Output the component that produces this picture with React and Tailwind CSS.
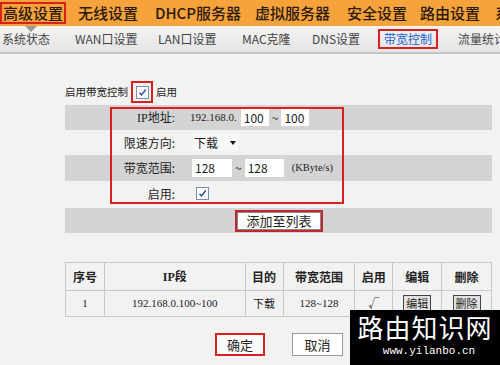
import React from "react";

const cjk = { fontFamily: '"Noto Sans CJK SC", "Noto Sans", sans-serif' };
const serif = { fontFamily: '"Liberation Serif", "Noto Sans CJK SC", serif' };

function Check() {
  return (
    <span className="inline-flex items-center justify-center w-[13px] h-[13px] bg-white border border-[#7b8fb0]">
      <svg width="9" height="9" viewBox="0 0 9 9">
        <path d="M1.5 4.8 L3.5 7 L7.8 1.5" fill="none" stroke="#2a4fa8" strokeWidth="1.4" />
      </svg>
    </span>
  );
}

const top = [
  ["高级设置", "w-[76px]", true],
  ["无线设置", "w-[77px]"],
  ["DHCP服务器", "w-[100px]"],
  ["虚拟服务器", "w-[92px]"],
  ["安全设置", "w-[73px]"],
  ["路由设置", "w-[75px]"],
  ["系统工具", "w-[80px]"],
];

const sub = [
  ["系统状态", "w-[73px]"],
  ["WAN口设置", "w-[83px]"],
  ["LAN口设置", "w-[84px]"],
  ["MAC克隆", "w-[70px]"],
  ["DNS设置", "w-[66px]"],
  ["带宽控制", "w-[80px]", true],
  ["流量统计", "w-[80px]"],
];

export default function App() {
  return (
    <div className="relative w-[500px] h-[365px] overflow-hidden bg-[#f2f2f2] text-[#222]" style={cjk}>
      {/* top orange bar */}
      <div className="h-[26px] bg-[#f6a33c] flex items-center pl-[2px] whitespace-nowrap">
        {top.map(([t, w, sel]) => (
          <div key={t} className={`${w} shrink-0 flex`}>
            <span
              className={`text-[15px] leading-[18px] font-medium text-[#2b1a08] ${sel ? "outline-2 outline-[#d8201c] px-[1px]" : ""}`}
            >
              {t}
            </span>
          </div>
        ))}
      </div>

      {/* sub tabs */}
      <div className="relative h-[28px] bg-gradient-to-b from-[#f4f4f4] to-[#e4e4e4] border-b-2 border-[#c4c4c4] flex items-center pl-[2px] whitespace-nowrap">
        <span className="absolute left-[25px] top-0 w-0 h-0 border-l-[6px] border-r-[6px] border-t-[6px] border-l-transparent border-r-transparent border-t-[#9a9a9a]" />
        {sub.map(([t, w, sel]) => (
          <div key={t} className={`${w} shrink-0 flex`}>
            <span
              className={`text-[12px] leading-[14px] ${sel ? "text-[#1b5fd6] border-2 border-[#d8201c] px-[4px] py-[1px]" : "text-[#444]"}`}
            >
              {t}
            </span>
          </div>
        ))}
      </div>

      {/* enable row */}
      <div className="mt-[27px] ml-[65px] h-[22px] flex items-center text-[10.5px]">
        <span>启用带宽控制</span>
        <span className="ml-[3px] w-[22px] h-[22px] border-2 border-[#d8201c] flex items-center justify-center">
          <Check />
        </span>
        <span className="ml-[3px]">启用</span>
      </div>

      {/* form */}
      <div className="relative mt-[2px] ml-[65px] w-[427px] text-[12px]">
        <div className="h-[25px] bg-[#d4d4d4] flex items-center">
          <div className="w-[110px] text-right" style={serif}>IP地址:</div>
          <div className="ml-[15px] flex items-center">
            <span className="text-[11px]" style={serif}>192.168.0.</span>
            <span className="ml-[4px] w-[28px] h-[17px] bg-white px-[3px] leading-[17px]">100</span>
            <span className="mx-[3px]">~</span>
            <span className="w-[28px] h-[17px] bg-white px-[3px] leading-[17px]">100</span>
          </div>
        </div>
        <div className="h-[25px] flex items-center">
          <div className="w-[110px] text-right">限速方向:</div>
          <div className="ml-[17px] w-[46px] h-[17px] bg-[#f7f7f7] flex items-center px-[2px] justify-between">
            <span>下载</span>
            <span className="w-0 h-0 border-l-[3px] border-r-[3px] border-t-[4px] border-l-transparent border-r-transparent border-t-[#111]" />
          </div>
        </div>
        <div className="h-[26px] bg-[#d4d4d4] flex items-center">
          <div className="w-[110px] text-right">带宽范围:</div>
          <div className="ml-[17px] flex items-center">
            <span className="w-[40px] h-[18px] bg-white px-[3px] leading-[18px]">128</span>
            <span className="mx-[3px]">~</span>
            <span className="w-[39px] h-[18px] bg-white px-[3px] leading-[18px]">128</span>
            <span className="ml-[8px] text-[10.5px] whitespace-nowrap" style={serif}>(KByte/s)</span>
          </div>
        </div>
        <div className="h-[25px] flex items-center">
          <div className="w-[110px] text-right">启用:</div>
          <div className="ml-[21px] flex">
            <Check />
          </div>
        </div>
        <div className="mt-[2px] h-[25px] bg-[#d4d4d4] flex items-center">
          <div className="ml-[170px] border-2 border-[#c0282e] flex">
            <span className="w-[84px] h-[18px] bg-white border border-[#888] text-center text-[13px] leading-[16px]">添加至列表</span>
          </div>
        </div>
        {/* red annotation frame */}
        <div className="absolute left-[45px] top-[2px] w-[234px] h-[97px] border-2 border-[#d8201c] pointer-events-none" />
      </div>

      {/* table */}
      <table className="mt-[29px] ml-[65px] w-[427px] border-collapse text-[11px] text-center">
        <thead>
          <tr className="h-[28px] font-bold text-[12px]">
            <th className="w-[39px] border border-[#c8c8c8]">序号</th>
            <th className="w-[141px] border border-[#c8c8c8]" style={serif}>IP段</th>
            <th className="w-[38px] border border-[#c8c8c8]">目的</th>
            <th className="w-[72px] border border-[#c8c8c8]">带宽范围</th>
            <th className="w-[38px] border border-[#c8c8c8]">启用</th>
            <th className="w-[49px] border border-[#c8c8c8]">编辑</th>
            <th className="w-[50px] border border-[#c8c8c8]">删除</th>
          </tr>
        </thead>
        <tbody>
          <tr className="h-[26px]">
            <td className="border border-[#c8c8c8]" style={serif}>1</td>
            <td className="border border-[#c8c8c8]" style={serif}>192.168.0.100~100</td>
            <td className="border border-[#c8c8c8]">下载</td>
            <td className="border border-[#c8c8c8]" style={serif}>128~128</td>
            <td className="border border-[#c8c8c8]">√</td>
            <td className="border border-[#c8c8c8]">
              <span className="inline-block px-[2px] bg-[#e2e2e2] border border-[#444] leading-[14px]">编辑</span>
            </td>
            <td className="border border-[#c8c8c8]">
              <span className="inline-block px-[2px] bg-[#e2e2e2] border border-[#444] leading-[14px]">删除</span>
            </td>
          </tr>
        </tbody>
      </table>

      {/* bottom buttons */}
      <div className="mt-[16px] ml-[215px] flex items-center gap-[27px] text-[13px]">
        <span className="w-[50px] h-[23px] bg-white border-2 border-[#d8201c] text-center leading-[19px]">确定</span>
        <span className="w-[51px] h-[23px] bg-white border border-[#999] text-center leading-[21px]">取消</span>
      </div>

      {/* watermark */}
      <div className="absolute left-[350px] top-[310px] w-[150px] h-[55px] bg-black text-white flex flex-col items-center">
        <span className="mt-[3px] text-[26px] leading-[28px] tracking-[1px]">路由知识网</span>
        <span className="mt-[4px] text-[11px] leading-[13px] ml-[8px]" style={{ fontFamily: '"Liberation Mono", monospace' }}>www.yilanbo.cn</span>
      </div>
    </div>
  );
}
